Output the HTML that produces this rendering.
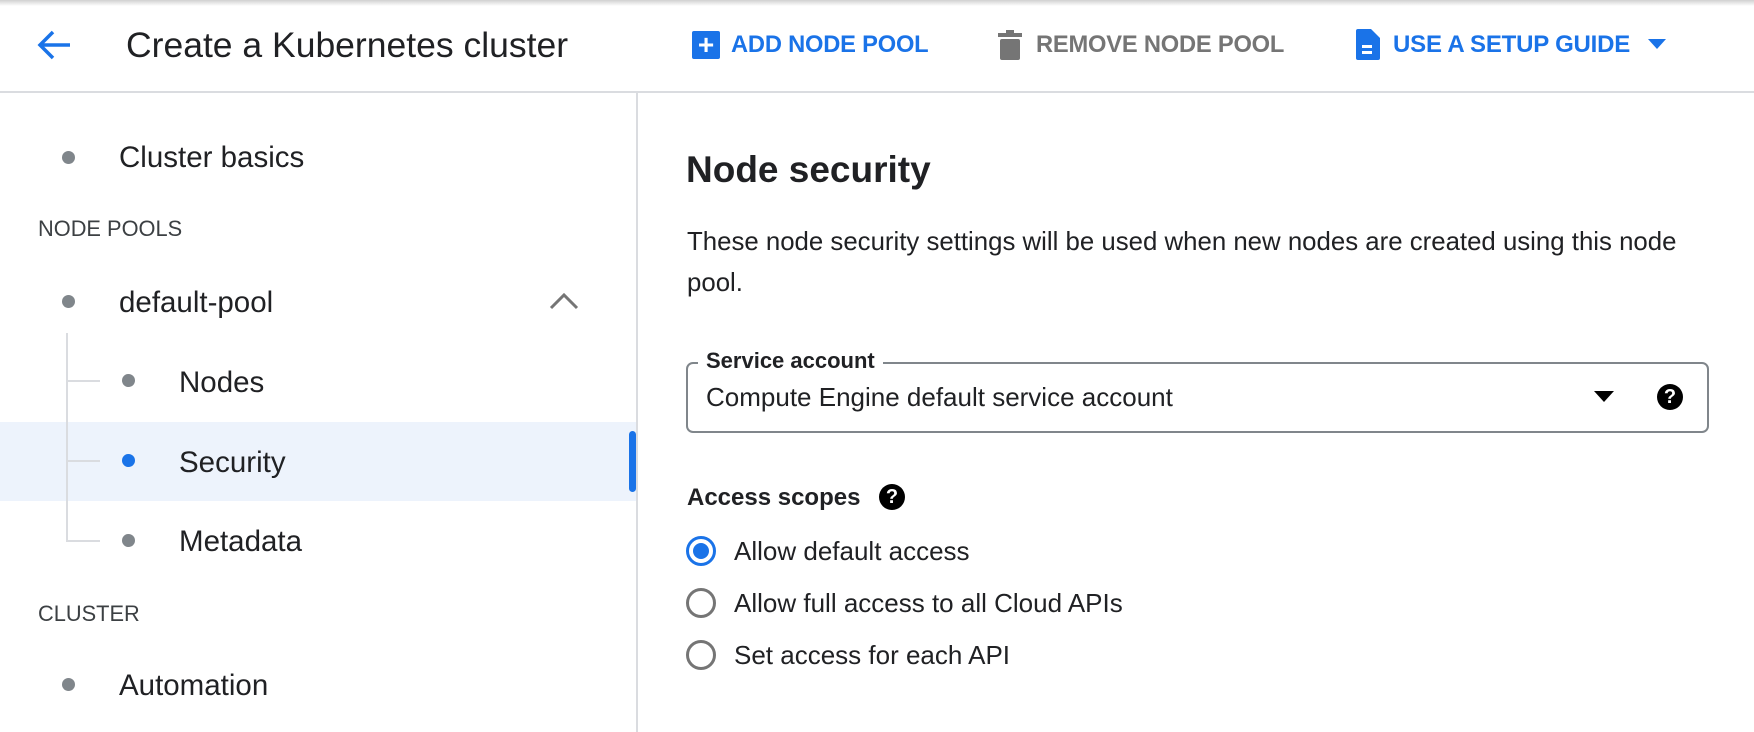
<!DOCTYPE html>
<html><head><meta charset="utf-8"><style>
*{margin:0;padding:0;box-sizing:border-box}
body{width:1754px;height:732px;overflow:hidden;background:#fff;font-family:"Liberation Sans",Arial,sans-serif;color:#202124;position:relative}
.a{position:absolute;white-space:nowrap}
.c{line-height:40px;height:40px;margin-top:-20px}
.dot{position:absolute;width:13px;height:13px;border-radius:50%;background:#80868b;margin:-6px 0 0 -6px}
.btn{font-size:23.7px;font-weight:bold;letter-spacing:-0.2px}
.side{font-size:29.5px}
.radio{position:absolute;width:30px;height:30px;border-radius:50%;border:3px solid #757575;margin:-15px 0 0 -15px}
.help{position:absolute;width:26px;height:26px;border-radius:50%;background:#000;color:#fff;font-weight:bold;font-size:20px;line-height:26px;text-align:center;margin:-13px 0 0 -13px}
</style></head><body>
<div class="a" style="left:0;top:0;width:1754px;height:6px;background:linear-gradient(#d0d0d0,#fff)"></div>
<svg class="a" style="left:36px;top:29px" width="36" height="32" viewBox="0 0 36 32"><path d="M34 16H5M17 3L4 16l13 13" fill="none" stroke="#1a73e8" stroke-width="3.5"/></svg>
<div class="a c" style="left:126px;top:45px;font-size:35.5px">Create a Kubernetes cluster</div>
<div class="a" style="left:692px;top:31px;width:28px;height:28px;background:#1a73e8;border-radius:2px;color:#fff;font-weight:bold;font-size:28px;line-height:28px;text-align:center">+</div>
<div class="a c btn" style="left:731px;top:45px;color:#1a73e8">ADD NODE POOL</div>
<svg class="a" style="left:998px;top:30px" width="24" height="30" viewBox="0 0 24 30"><rect x="0" y="3" width="24" height="4" fill="#757575"/><rect x="8" y="0" width="8" height="4" fill="#757575"/><rect x="2" y="9" width="20" height="21" rx="2" fill="#757575"/></svg>
<div class="a c btn" style="left:1036px;top:45px;color:#757575">REMOVE NODE POOL</div>
<svg class="a" style="left:1356px;top:29px" width="24" height="31" viewBox="0 0 24 31"><path d="M2 0h13l9 9v20a2 2 0 0 1-2 2H2a2 2 0 0 1-2-2V2a2 2 0 0 1 2-2z" fill="#1a73e8"/><rect x="6" y="16" width="10" height="3" fill="#fff"/><rect x="6" y="22" width="10" height="3" fill="#fff"/></svg>
<div class="a c btn" style="left:1393px;top:45px;color:#1a73e8;font-size:24px">USE A SETUP GUIDE</div>
<svg class="a" style="left:1648px;top:39px" width="18" height="10"><path d="M0 0h18L9 10z" fill="#1a73e8"/></svg>
<div class="a" style="left:0;top:91px;width:1754px;height:2px;background:#dadce0"></div>
<div class="a" style="left:636px;top:93px;width:2px;height:639px;background:#dadce0"></div>

<div class="a" style="left:0;top:422px;width:636px;height:79px;background:#edf3fc"></div>
<div class="a" style="left:629px;top:431px;width:7px;height:61px;background:#1a73e8;border-radius:4px"></div>
<div class="a" style="left:66px;top:333px;width:2px;height:208px;background:#dadce0"></div>
<div class="a" style="left:66px;top:380px;width:34px;height:2px;background:#dadce0"></div>
<div class="a" style="left:66px;top:460px;width:34px;height:2px;background:#dadce0"></div>
<div class="a" style="left:66px;top:540px;width:34px;height:2px;background:#dadce0"></div>

<div class="dot" style="left:68px;top:157px"></div>
<div class="a c side" style="left:119px;top:158px">Cluster basics</div>
<div class="a c" style="left:38px;top:229px;font-size:21.8px;color:#3c4043">NODE POOLS</div>
<div class="dot" style="left:68px;top:301px"></div>
<div class="a c side" style="left:119px;top:303px">default-pool</div>
<svg class="a" style="left:549px;top:292px" width="30" height="18"><path d="M2 16L15 3l13 13" fill="none" stroke="#757575" stroke-width="3"/></svg>
<div class="dot" style="left:128px;top:380px"></div>
<div class="a c side" style="left:179px;top:383px">Nodes</div>
<div class="dot" style="left:128px;top:460px;background:#1a73e8"></div>
<div class="a c side" style="left:179px;top:463px">Security</div>
<div class="dot" style="left:128px;top:540px"></div>
<div class="a c side" style="left:179px;top:542px">Metadata</div>
<div class="a c" style="left:38px;top:614px;font-size:21.8px;color:#3c4043">CLUSTER</div>
<div class="dot" style="left:68px;top:684px"></div>
<div class="a c side" style="left:119px;top:686px">Automation</div>

<div class="a c" style="left:686px;top:170px;font-size:37px;font-weight:bold">Node security</div>
<div class="a c" style="left:687px;top:242px;font-size:25.8px">These node security settings will be used when new nodes are created using this node</div>
<div class="a c" style="left:687px;top:283px;font-size:25.8px">pool.</div>
<div class="a" style="left:686px;top:362px;width:1023px;height:71px;border:2px solid #80868b;border-radius:7px"></div>
<div class="a c" style="left:698px;top:361px;font-size:22px;font-weight:bold;background:#fff;padding:0 8px;line-height:24px;height:24px;margin-top:-12px">Service account</div>
<div class="a c" style="left:706px;top:397px;font-size:26px">Compute Engine default service account</div>
<svg class="a" style="left:1594px;top:391px" width="20" height="11"><path d="M0 0h20L10 11z" fill="#000"/></svg>
<div class="help" style="left:1670px;top:397px">?</div>
<div class="a c" style="left:687px;top:498px;font-size:24px;font-weight:bold">Access scopes</div>
<div class="help" style="left:892px;top:497px">?</div>
<div class="radio" style="left:701px;top:551px;border-color:#1a73e8"><div style="position:absolute;left:4px;top:4px;width:16px;height:16px;border-radius:50%;background:#1a73e8"></div></div>
<div class="a c" style="left:734px;top:551px;font-size:26px">Allow default access</div>
<div class="radio" style="left:701px;top:603px"></div>
<div class="a c" style="left:734px;top:603px;font-size:26px">Allow full access to all Cloud APIs</div>
<div class="radio" style="left:701px;top:655px"></div>
<div class="a c" style="left:734px;top:655px;font-size:26px">Set access for each API</div>
</body></html>
